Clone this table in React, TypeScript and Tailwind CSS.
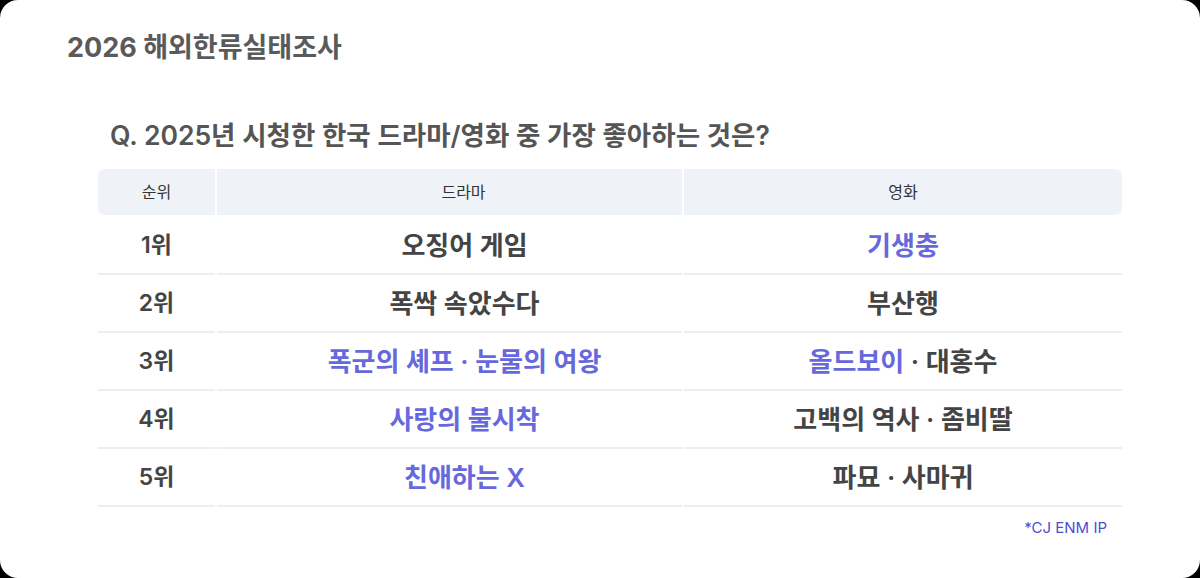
const rows = [
  { rank: "1위", drama: [{ t: "오징어 게임" }], movie: [{ t: "기생충", hi: true }] },
  { rank: "2위", drama: [{ t: "폭싹 속았수다" }], movie: [{ t: "부산행" }] },
  {
    rank: "3위",
    drama: [{ t: "폭군의 셰프 · 눈물의 여왕", hi: true }],
    movie: [{ t: "올드보이", hi: true }, { t: " · 대홍수" }]
  },
  { rank: "4위", drama: [{ t: "사랑의 불시착", hi: true }], movie: [{ t: "고백의 역사 · 좀비딸" }] },
  { rank: "5위", drama: [{ t: "친애하는 X", hi: true }], movie: [{ t: "파묘 · 사마귀" }] }
];

type Part = { t: string; hi?: boolean };

function Cell({ parts, shift }: { parts: Part[]; shift?: boolean }) {
  return (
    <div
      className={`flex h-[58px] items-center justify-center border-b-2 border-[#eeeeee] text-[26px] font-semibold ${
        shift ? "pl-[30px]" : ""
      }`}
    >
      {parts.map((p, i) => (
        <span key={i} className={p.hi ? "text-[#6668dc]" : "text-[#444444]"}>
          {p.t.replace(/ /g, "\u00a0")}
        </span>
      ))}
    </div>
  );
}

export default function App() {
  return (
    <div className="h-[578px] w-[1200px] bg-black" style={{ fontFamily: "Inter, 'Noto Sans CJK KR', sans-serif" }}>
      <div className="flex h-full flex-col rounded-[18px] bg-white">
        <h1 className="pl-[67px] pt-[30px] text-[27px] font-bold leading-[36px] text-[#5a5a5a]">2026 해외한류실태조사</h1>

        <p className="ml-[110px] mt-[52px] text-[26.5px] font-semibold leading-[34px] text-[#555555]">
          Q. 2025년 시청한 한국 드라마/영화 중 가장 좋아하는 것은?
        </p>

        <div className="ml-[98px] mt-[17px] w-[1024px]">
          <div className="grid grid-cols-[117px_465px_438px] gap-x-[2px]">
            <div className="flex h-[46px] items-center justify-center rounded-l-[7px] bg-[#eff3f8] text-[16px] text-[#333333]">순위</div>
            <div className="flex h-[46px] items-center justify-center bg-[#eff3f8] pl-[28px] text-[16px] text-[#333333]">드라마</div>
            <div className="flex h-[46px] items-center justify-center rounded-r-[7px] bg-[#eff3f8] text-[16px] text-[#333333]">영화</div>
            <div className="col-span-3 h-[2px]" />

            {rows.map((r) => (
              <div key={r.rank} className="contents">
                <div className="flex h-[58px] items-center justify-center border-b-2 border-[#eeeeee] text-[23px] font-semibold text-[#444444]">
                  {r.rank}
                </div>
                <Cell parts={r.drama} shift />
                <Cell parts={r.movie} />
              </div>
            ))}
          </div>
          <p className="mt-[11px] pr-[15px] text-right text-[15px] leading-[20px] text-[#4b4fd4]">*CJ ENM IP</p>
        </div>
      </div>
    </div>
  );
}
